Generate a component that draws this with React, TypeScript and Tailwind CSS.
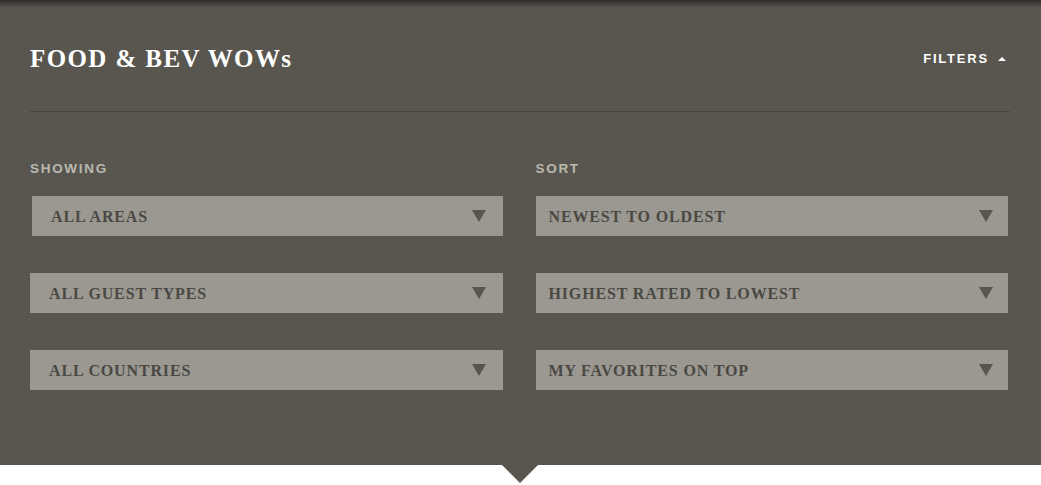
import React from 'react';

const serif = { fontFamily: '"Liberation Serif", "Times New Roman", serif' };
const sans = { fontFamily: '"Liberation Sans", Arial, sans-serif' };

// Caja de seleccion con flecha
const Select: React.FC<{ label: string; className?: string }> = ({ label, className = '' }) => (
  <div className={`flex h-[40px] items-center justify-between bg-[#9a9891] ${className}`}>
    <span className="pt-[2px] text-[16px] font-bold tracking-[0.85px] text-[#4a4843]" style={serif}>
      {label}
    </span>
    <span className="h-0 w-0 border-x-[7px] border-t-[12px] border-x-transparent border-t-[#57554d]" />
  </div>
);

const Column: React.FC<{ title: string; items: string[]; pad: string }> = ({ title, items, pad }) => (
  <div className="flex flex-col">
    <div className="h-[16px] text-[13.5px] font-bold leading-[16px] tracking-[1.7px] text-[#bab8b0]" style={sans}>
      {title}
    </div>
    <div className="mt-[19px] flex flex-col gap-[37px]">
      {items.map((it, i) => (
        <Select key={it} label={it} className={`${pad} ${i === 0 && title === 'SHOWING' ? 'ml-[2px]' : ''}`} />
      ))}
    </div>
  </div>
);

export default function App() {
  return (
    <div className="w-[1041px] h-[485px] bg-white">
      <div className="relative h-[465px] bg-[#58564e]">
        {/* sombra superior */}
        <div className="absolute inset-x-0 top-0 h-[8px] bg-gradient-to-b from-[#2f2e2a] to-transparent" />
        <div className="px-[30px] pt-[44px]">
          <div className="flex items-center justify-between">
            <h1 className="text-[25px] font-bold leading-[30px] tracking-[1.4px] text-white" style={serif}>
              FOOD &amp; BEV WOWs
            </h1>
            <div className="mr-[5px] flex items-center gap-[9px]">
              <span className="text-[13px] font-bold tracking-[1.8px] text-white" style={sans}>
                FILTERS
              </span>
              <span className="h-0 w-0 border-x-[4px] border-b-[4px] border-x-transparent border-b-white" />
            </div>
          </div>
          <div className="mt-[37px] h-px w-[980px] bg-[#46453f]" />
          <div className="mt-[49px] grid w-[978px] grid-cols-2 gap-[33px]">
            <Column title="SHOWING" pad="pl-[19px] pr-[17px]" items={['ALL AREAS', 'ALL GUEST TYPES', 'ALL COUNTRIES']} />
            <Column title="SORT" pad="pl-[13px] pr-[15px]" items={['NEWEST TO OLDEST', 'HIGHEST RATED TO LOWEST', 'MY FAVORITES ON TOP']} />
          </div>
        </div>
        {/* muesca inferior */}
        <div className="absolute left-[502px] top-[465px] h-0 w-0 border-x-[18px] border-t-[18px] border-x-transparent border-t-[#58564e]" />
      </div>
    </div>
  );
}
